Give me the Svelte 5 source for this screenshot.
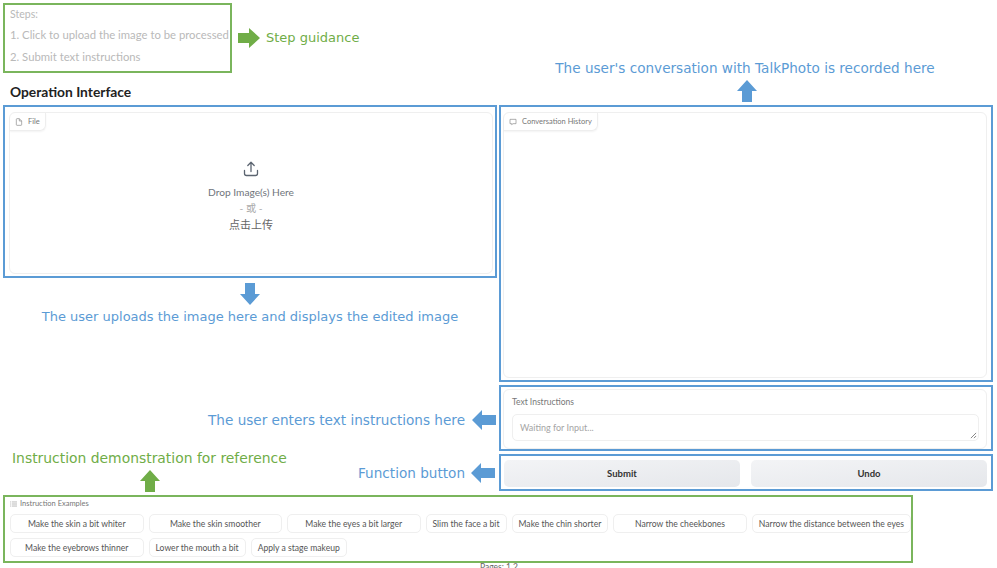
<script>
  const firstRow = [
    { text: 'Make the skin a bit whiter', wide: true },
    { text: 'Make the skin smoother', wide: true },
    { text: 'Make the eyes a bit larger', wide: true },
    { text: 'Slim the face a bit' },
    { text: 'Make the chin shorter' },
    { text: 'Narrow the cheekbones', wide: true },
    { text: 'Narrow the distance between the eyes' }
  ];
  const secondRow = [
    { text: 'Make the eyebrows thinner', wide: true },
    { text: 'Lower the mouth a bit' },
    { text: 'Apply a stage makeup' }
  ];
</script>

<div class="page">
  <div class="columns">
    <div class="head-left">
      <div class="steps-row">
        <div class="steps">
          <p>Steps:</p>
          <p>1. Click to upload the image to be processed</p>
          <p>2. Submit text instructions</p>
        </div>
        <svg class="arrow-right" viewBox="0 0 22 20"><path d="M0 5h11V0l11 10-11 10v-5H0z" fill="#70ad47" /></svg>
        <span class="note green small">Step guidance</span>
      </div>
      <h2>Operation Interface</h2>
    </div>

    <div class="head-right">
      <span class="note blue">The user's conversation with TalkPhoto is recorded here</span>
      <svg class="arrow-up" viewBox="0 0 20 22"><path d="M10 0l10 11h-5v11H5V11H0z" fill="#5b9bd5" /></svg>
    </div>

    <div class="main-left">
      <div class="blue-box upload-box">
        <div class="card upload-card">
          <div class="chip">
            <svg class="chip-icon" viewBox="0 0 24 24" fill="none" stroke="#888" stroke-width="2"><path d="M13 2H6a2 2 0 0 0-2 2v16a2 2 0 0 0 2 2h12a2 2 0 0 0 2-2V9z" /><path d="M13 2v7h7" /></svg>
            File
          </div>
          <div class="drop">
            <svg class="upload-icon" viewBox="0 0 16 16" fill="none" stroke="#5b6470" stroke-width="1.3" stroke-linecap="round" stroke-linejoin="round"><path d="M1.5 9.5v3a2 2 0 0 0 2 2h9a2 2 0 0 0 2-2v-3" /><path d="M8 10.5V1.5M4.8 4.5L8 1.3l3.2 3.2" /></svg>
            <span class="drop-line first">Drop Image(s) Here</span>
            <span class="drop-line or">- 或 -</span>
            <span class="drop-line click">点击上传</span>
          </div>
        </div>
      </div>

      <div class="down-note">
        <svg class="arrow-down" viewBox="0 0 20 22"><path d="M5 0h10v11h5L10 22 0 11h5z" fill="#5b9bd5" /></svg>
        <span class="note blue small">The user uploads the image here and displays the edited image</span>
      </div>

      <div class="side-note enters">
        <span class="note blue">The user enters text instructions here</span>
        <svg class="arrow-left" viewBox="0 0 24 20"><path d="M0 10L10 0v5h14v10H10v5z" fill="#5b9bd5" /></svg>
      </div>

      <div class="bottom-notes">
        <div class="demo-note">
          <span class="note green large">Instruction demonstration for reference</span>
          <svg class="arrow-up" viewBox="0 0 20 22"><path d="M10 0l10 11h-5v11H5V11H0z" fill="#70ad47" /></svg>
        </div>
        <div class="side-note function">
          <span class="note blue">Function button</span>
          <svg class="arrow-left" viewBox="0 0 24 20"><path d="M0 10L10 0v5h14v10H10v5z" fill="#5b9bd5" /></svg>
        </div>
      </div>
    </div>

    <div class="main-right">
      <div class="blue-box history-box">
        <div class="card history-card">
          <div class="chip">
            <svg class="chip-icon" viewBox="0 0 24 24" fill="none" stroke="#888" stroke-width="2"><path d="M3 4h18v13h-9l-4 3v-3H3z" /></svg>
            Conversation History
          </div>
        </div>
      </div>

      <div class="blue-box text-box">
        <div class="card text-card">
          <span class="text-label">Text Instructions</span>
          <div class="input">
            <span>Waiting for Input...</span>
            <svg class="resize" viewBox="0 0 8 8" stroke="#777" stroke-width="1"><path d="M1 7l6-6M4.5 7L7 4.5" /></svg>
          </div>
        </div>
      </div>

      <div class="blue-box button-box">
        <button>Submit</button>
        <button>Undo</button>
      </div>
    </div>
  </div>

  <div class="examples">
    <div class="examples-title">
      <svg class="list-icon" viewBox="0 0 12 10" stroke="#888" stroke-width="1"><path d="M3 1.5h9M3 5h9M3 8.5h9M0 1.5h1.5M0 5h1.5M0 8.5h1.5" /></svg>
      Instruction Examples
    </div>
    <div class="sample-row">
      {#each firstRow as sample}
        <span class="sample" class:wide={sample.wide}>{sample.text}</span>
      {/each}
    </div>
    <div class="sample-row">
      {#each secondRow as sample}
        <span class="sample" class:wide={sample.wide}>{sample.text}</span>
      {/each}
    </div>
  </div>

  <div class="pages">Pages: 1 2</div>
</div>

<style>
  :global(body) {
    margin: 0;
    background: #fff;
    overflow: hidden;
  }

  .page {
    width: 997px;
    height: 568px;
    overflow: hidden;
    box-sizing: border-box;
    padding: 3px 0 0 3px;
    font-family: "Lato", "Noto Sans CJK SC", sans-serif;
    color: #555;
  }

  .columns {
    display: grid;
    grid-template-columns: 494px 494px;
    grid-template-rows: 102px 390px;
    column-gap: 2px;
  }

  .note {
    font-family: "DejaVu Sans", sans-serif;
    font-size: 13.6px;
    line-height: 16px;
    white-space: nowrap;
  }

  .note.small {
    font-size: 13px;
  }

  .note.large {
    font-size: 13.9px;
  }

  .green {
    color: #70ad47;
  }

  .blue {
    color: #5b9bd5;
  }

  /* header */
  .steps-row {
    display: flex;
    align-items: center;
  }

  .steps {
    box-sizing: border-box;
    width: 229px;
    height: 70px;
    border: 2px solid #7ab55c;
    padding: 2px 0 0 5px;
    font-size: 11.3px;
    color: #b9b9b9;
    white-space: nowrap;
  }

  .steps p {
    margin: 0 0 8px;
    line-height: 14px;
  }

  .steps p:first-child {
    font-size: 10.5px;
    margin-bottom: 7px;
  }

  .arrow-right {
    width: 22px;
    height: 20px;
    margin: 0 6px 0 6px;
  }

  h2 {
    margin: 10px 0 0 7px;
    font-size: 13.8px;
    line-height: 18px;
    font-weight: 700;
    color: #222;
  }

  .head-right {
    display: flex;
    flex-direction: column;
    align-items: center;
    justify-content: flex-end;
    padding-bottom: 3px;
  }

  .head-right .note {
    margin: 0 0 4px -2px;
  }

  .head-right .arrow-up {
    margin-left: 2px;
  }

  .arrow-up {
    display: block;
    width: 20px;
    height: 22px;
  }

  .arrow-down {
    display: block;
    width: 20px;
    height: 22px;
  }

  .arrow-left {
    display: block;
    width: 24px;
    height: 20px;
    margin-left: 7px;
  }

  /* left column */
  .main-left {
    display: flex;
    flex-direction: column;
    height: 390px;
  }

  .blue-box {
    box-sizing: border-box;
    border: 2px solid #5b9bd5;
  }

  .card {
    box-sizing: border-box;
    position: relative;
    border: 1px solid #efefef;
    border-radius: 6px;
    background: #fff;
  }

  .upload-box {
    height: 173px;
    padding: 5px 2px 2px 4px;
  }

  .upload-card {
    height: 100%;
  }

  .chip {
    position: absolute;
    top: 0;
    left: 0;
    display: flex;
    align-items: center;
    gap: 5px;
    height: 17px;
    padding: 0 5px;
    border-right: 1px solid #eee;
    border-bottom: 1px solid #eee;
    border-radius: 6px 0 6px 0;
    box-shadow: 0 1px 2px rgba(0, 0, 0, 0.05);
    font-size: 7.5px;
    color: #777;
    white-space: nowrap;
  }

  .chip-icon {
    width: 8px;
    height: 8px;
  }

  .drop {
    height: 100%;
    display: flex;
    flex-direction: column;
    align-items: center;
    padding-top: 48px;
    box-sizing: border-box;
  }

  .upload-icon {
    width: 16px;
    height: 16px;
    margin-bottom: 7px;
  }

  .drop-line {
    line-height: 16px;
    font-size: 10.2px;
  }

  .first {
    color: #70757c;
  }

  .or {
    color: #aaa;
  }

  .click {
    margin-top: 1px;
    font-size: 11px;
    color: #666;
  }

  .down-note {
    display: flex;
    flex-direction: column;
    align-items: center;
    margin-top: 5px;
  }

  .down-note .note {
    margin-top: 4px;
    line-height: 16px;
  }

  .side-note {
    display: flex;
    align-items: center;
    justify-content: flex-end;
  }

  .enters {
    margin-top: 85px;
    padding-right: 1px;
  }

  .bottom-notes {
    margin-top: auto;
    display: flex;
    justify-content: space-between;
    align-items: flex-end;
    padding: 0 2px 3px 9px;
  }

  .demo-note {
    display: flex;
    flex-direction: column;
    align-items: center;
  }

  .demo-note .note {
    margin-bottom: 4px;
  }

  .demo-note .arrow-up {
    margin-left: 2px;
  }

  .function {
    margin-bottom: 9px;
  }

  .function .arrow-left {
    margin-left: 6px;
  }

  /* right column */
  .main-right {
    display: flex;
    flex-direction: column;
    gap: 3px;
  }

  .history-box {
    height: 277px;
    padding: 5px 4px 2px 2px;
  }

  .history-card {
    height: 100%;
  }

  .text-box {
    height: 66px;
    padding: 2px 4px 0 2px;
  }

  .text-card {
    height: 100%;
    padding: 6px 7px 0 8px;
  }

  .text-label {
    display: block;
    font-size: 8.5px;
    line-height: 12px;
    color: #777;
  }

  .input {
    box-sizing: border-box;
    position: relative;
    height: 27px;
    margin-top: 6px;
    padding: 7px 7px;
    border: 1px solid #efefef;
    border-radius: 5px;
    font-size: 9px;
    line-height: 12px;
    color: #a5a5a5;
  }

  .resize {
    position: absolute;
    right: 1px;
    bottom: 1px;
    width: 7px;
    height: 7px;
  }

  .button-box {
    height: 37px;
    display: flex;
    gap: 11px;
    padding: 4px 4px 2px 3px;
  }

  button {
    flex: 1;
    border: 0;
    border-radius: 5px;
    background: linear-gradient(to bottom right, #f3f4f6, #e5e7eb);
    font-family: inherit;
    font-size: 9.5px;
    font-weight: 700;
    color: #333;
  }

  /* examples */
  .examples {
    box-sizing: border-box;
    width: 910px;
    height: 68px;
    border: 2px solid #7ab55c;
    padding: 0 0 0 5px;
  }

  .examples-title {
    display: flex;
    align-items: center;
    gap: 3px;
    height: 13px;
    font-size: 7.5px;
    color: #777;
  }

  .list-icon {
    width: 7px;
    height: 6px;
  }

  .sample-row {
    display: flex;
    gap: 5px;
    margin-top: 5px;
    white-space: nowrap;
  }

  .examples-title + .sample-row {
    margin-top: 4px;
  }

  .sample {
    box-sizing: border-box;
    height: 19px;
    display: flex;
    align-items: center;
    justify-content: center;
    padding: 0 6px;
    border: 1px solid #efefef;
    border-radius: 5px;
    font-size: 8.6px;
    color: #555;
  }

  .wide {
    min-width: 133.5px;
  }

  .pages {
    margin-top: -1px;
    padding-left: 477px;
    font-size: 8.5px;
    line-height: 10px;
    color: #666;
  }
</style>
